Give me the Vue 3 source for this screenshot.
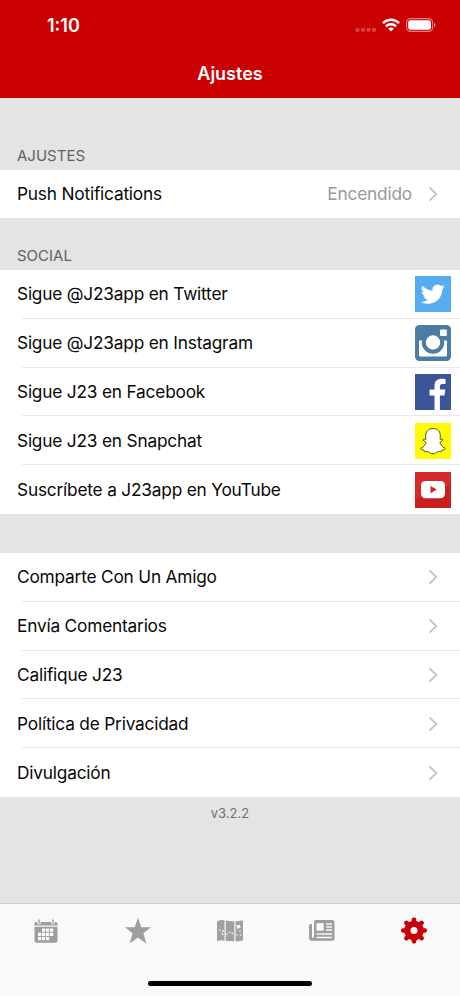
<script setup>
const social = [
  { label: 'Sigue @J23app en Twitter', icon: 'twitter' },
  { label: 'Sigue @J23app en Instagram', icon: 'instagram' },
  { label: 'Sigue J23 en Facebook', icon: 'facebook' },
  { label: 'Sigue J23 en Snapchat', icon: 'snapchat' },
  { label: 'Suscríbete a J23app en YouTube', icon: 'youtube' },
]
const links = ['Comparte Con Un Amigo', 'Envía Comentarios', 'Califique J23', 'Política de Privacidad', 'Divulgación']
const teeth = [0, 45, 90, 135, 180, 225, 270, 315]
const days = [[8, 9], [12, 9], [16, 9], [4, 13.2], [8, 13.2], [12, 13.2], [16, 13.2], [4, 17.4], [8, 17.4], [12, 17.4]]
</script>

<template>
  <div class="screen">
    <header class="top">
      <div class="status">
        <span class="time">1:10</span>
        <div class="indicators">
          <svg class="dots" width="22" height="14" viewBox="0 0 22 14" fill="#fff" fill-opacity=".25">
            <rect x="0.5" y="10" width="4" height="3.8" rx="1" /><rect x="6" y="10" width="4" height="3.8" rx="1" />
            <rect x="11.5" y="10" width="4" height="3.8" rx="1" /><rect x="17" y="10" width="4" height="3.8" rx="1" />
          </svg>
          <svg class="wifi" width="18" height="14" viewBox="0 0 18 14" fill="none" stroke="#fff" stroke-width="2.4">
            <path d="M.9 5.2C5.5.6 12.5.6 17.1 5.2M3.9 8.3c2.900-2.800 7.300-2.800 10.200 0" />
            <path d="M6.1 10.5c1.700-1.500 4.100-1.500 5.800 0L9 13.400z" fill="#fff" stroke="none" />
          </svg>
          <svg class="battery" width="30" height="14" viewBox="0 0 30 14">
            <rect x=".6" y=".6" width="26" height="12.8" rx="3.8" fill="none" stroke="#fff" stroke-opacity=".5" stroke-width="1.1" />
            <rect x="2.2" y="2.2" width="22.8" height="9.6" rx="2.2" fill="#fff" />
            <path d="M28 4.800c2 .8 2 3.600 0 4.400z" fill="#fff" fill-opacity=".55" />
          </svg>
        </div>
      </div>
      <h1>Ajustes</h1>
    </header>

    <main>
      <h2 class="first">AJUSTES</h2>
      <section class="group">
        <div class="row push">
          <span>Push Notifications</span>
          <span class="value">Encendido</span>
          <svg class="chevron" width="10" height="16" viewBox="0 0 10 16"><path d="M1.5 1.3 8.3 8l-6.800 6.700" /></svg>
        </div>
      </section>
      <h2>SOCIAL</h2>
      <section class="group">
        <div v-for="s in social" :key="s.icon" class="row">
          <span>{{ s.label }}</span>
          <svg class="brand" width="36" height="36" viewBox="0 0 36 36">
            <g v-if="s.icon === 'twitter'">
              <rect width="36" height="36" fill="#55acee" />
              <path transform="translate(6 5.7) scale(1.01)" fill="#fff" d="M23.600 5c-.9.400-1.800.7-2.800.8 1-.6 1.800-1.600 2.100-2.700-.9.600-2 1-3.100 1.200a4.900 4.900 0 0 0-8.300 4.500C7.400 8.600 3.800 6.600 1.400 3.700a4.900 4.900 0 0 0 1.500 6.500c-.8 0-1.500-.2-2.200-.6 0 2.400 1.700 4.300 3.900 4.800-.7.200-1.400.2-2.200.1.600 1.900 2.400 3.300 4.500 3.400A9.800 9.800 0 0 1-.3 19.900c9.800 5.700 21.700-1.400 21.400-12.400 1-.7 1.800-1.500 2.500-2.500z" />
            </g>
            <g v-else-if="s.icon === 'instagram'">
              <rect width="36" height="36" rx="4.5" fill="#4c7ba3" />
              <path d="M4 15.500h28V30q0 1.500-1.500 1.500h-25Q4 31.500 4 30z" fill="#fff" />
              <circle cx="18" cy="17.500" r="11.200" fill="#4c7ba3" />
              <circle cx="18" cy="17.500" r="7.200" fill="#fff" />
              <rect x="25" y="4.500" width="6.800" height="6.500" rx="1" fill="#fff" />
            </g>
            <g v-else-if="s.icon === 'facebook'">
              <rect width="36" height="36" fill="#3b5599" />
              <path d="M19.500 36V21.500h-5v-6h5v-3.800c0-5 3-7 7.300-7 1.700 0 3.100.1 3.700.2v5h-2.800c-2.300 0-2.800 1.100-2.800 2.800v2.800h5.400l-.8 6h-4.600V36z" fill="#fff" />
            </g>
            <g v-else-if="s.icon === 'snapchat'">
              <rect width="36" height="36" fill="#fffc00" />
              <path d="M18 5.500c5.200 0 7.500 3.600 7.300 7.500l-.2 3.300c1 .5 2.200-.6 2.800.3.600 1-1.700 1.600-2.700 2.500-.8 1 1.900 5.300 5 6 .9.500-.3 1.600-3.100 2-.4.500-.2 1.500-.8 1.600-1 .1-2.500-.4-4 .2-1.500.7-2.300 2-4.300 2s-2.800-1.300-4.300-2c-1.500-.6-3-.1-4-.2-.6-.1-.4-1.100-.8-1.600-2.800-.4-4-1.500-3.100-2 3.100-.7 5.800-5 5-6-1-.9-3.300-1.500-2.700-2.500.6-.9 1.800.2 2.800-.3l-.2-3.300C10.500 9.100 12.800 5.500 18 5.500z" fill="#fff" stroke="#55521b" stroke-width="1" stroke-linejoin="round" />
            </g>
            <g v-else>
              <rect width="36" height="36" fill="#c81f20" />
              <path d="M0 0h36v13L0 27z" fill="#d5292a" />
              <rect x="6" y="9" width="24" height="17.300" rx="4.500" fill="#fff" />
              <path d="m15.500 14 6.200 3.600-6.200 3.600z" fill="#c92324" />
            </g>
          </svg>
        </div>
      </section>
      <section class="group links">
        <div v-for="l in links" :key="l" class="row">
          <span>{{ l }}</span>
          <svg class="chevron" width="10" height="16" viewBox="0 0 10 16"><path d="M1.5 1.3 8.3 8l-6.800 6.700" /></svg>
        </div>
      </section>
      <p class="version">v3.2.2</p>
    </main>

    <nav>
      <div class="tabs">
        <svg width="28" height="28" viewBox="0 0 28 28">
          <g transform="translate(2 2)">
            <path d="M.5 4.500Q.5 3 2 3h20q1.500 0 1.500 1.500v2H.5zM.5 7.800h23v14q0 2-2 2H2.500q-2 0-2-2z" fill="#9e9e9e" />
            <circle cx="5" cy="3.500" r="1.900" fill="#f9f9f9" /><circle cx="19" cy="3.500" r="1.900" fill="#f9f9f9" />
            <path d="M5 1v3M19 1v3" stroke="#9e9e9e" stroke-width="1.400" stroke-linecap="round" />
            <rect v-for="d in days" :key="d.join()" :x="d[0]" :y="d[1] + .5" width="3.200" height="3.300" fill="#f9f9f9" />
          </g>
        </svg>
        <svg width="28" height="28" viewBox="0 0 28 28"><path d="m14 .8 3.300 9.400h9.700l-7.600 6.100 2.900 10.100-8.300-5.800-8.300 5.800 2.900-10.100L1 10.200h9.700z" fill="#9e9e9e" /></svg>
        <svg width="28" height="28" viewBox="0 0 28 28">
          <path d="M1 5.500q0-1.200 1.200-1.700Q5 2.800 8.500 3.200v20.500q-3.500-.8-6.300.3Q1 24.500 1 23.300zM9.700 3.400l8.600 1v19.800l-8.600-.4zM19.500 4.200q3.500.3 6-.7 1.500-.5 1.500 1v17.800q0 1.100-1.200 1.500-3 .8-6.300.3z" fill="#a0a0a0" />
          <g fill="#f9f9f9"><circle cx="4" cy="13" r=".8" /><circle cx="7" cy="14" r=".9" /><circle cx="6.500" cy="17" r=".9" /><circle cx="11" cy="17" r=".8" /><circle cx="16.500" cy="16.500" r=".8" /><circle cx="21" cy="18" r=".8" /><circle cx="24" cy="14" r=".8" /><circle cx="24.500" cy="18" r=".8" /><path d="M12 16l2-1.500 2 1.500-2-.5zM20 8l2 .5 2-1v2l1 1-2 .5-1.500 1.500-.5-2z" /></g>
        </svg>
        <svg width="28" height="28" viewBox="0 0 28 28">
          <path d="M1 8.500q0-1.600 2-1.600h1V20q0 1 1 1t1-1V5q0-2 2-2h16.500q2 0 2 2v16.500q0 2.300-2.300 2.300H4q-3 0-3-3z" fill="#9e9e9e" />
          <path d="M8.500 6.200h7.200v7.500H8.500z" fill="#f9f9f9" />
          <path d="M18 7h6M18 10h6M18 13h6M8.500 17h15.500M8.500 20.500h15.500" stroke="#f9f9f9" stroke-width="1.300" />
        </svg>
        <svg width="28" height="28" viewBox="0 0 28 28">
          <g fill="#c90007">
            <rect v-for="a in teeth" :key="a" :transform="`rotate(${a} 14 13.5)`" x="11.700" y=".5" width="4.600" height="8" rx="2" />
            <circle cx="14" cy="13.500" r="9.800" />
          </g>
          <circle cx="14" cy="13.500" r="3.500" fill="#f9f9f9" />
        </svg>
      </div>
      <div class="home"></div>
    </nav>
  </div>
</template>

<style>
body { margin: 0; }
</style>
<style scoped>
.screen { width: 460px; height: 996px; display: flex; flex-direction: column; overflow: hidden; background: #e4e4e4; color: #080808; font-family: Inter, "Liberation Sans", sans-serif; }
.top { height: 98px; background: #cb0000; color: #fff; }
.status { height: 50px; display: flex; justify-content: space-between; padding: 0 23px 0 47px; }
.time { padding-top: 15px; font-size: 18px; line-height: 22px; font-weight: 600; }
.indicators { display: flex; align-items: flex-start; padding-top: 18px; }
.wifi { margin-left: 5px; }
.battery { margin-left: 6px; margin-right: 1px; }
h1 { margin: 13px 0 0; text-align: center; font-size: 18px; line-height: 22px; font-weight: 600; }
main { flex: 1; min-height: 0; }
h2 { box-sizing: border-box; margin: 0; height: 52px; padding: 28px 17px 0; font-size: 15px; line-height: 20px; font-weight: 400; color: #626262; }
h2.first { height: 72px; padding-top: 48px; }
.group { background: #fff; }
.row { display: flex; align-items: center; height: 48.8px; padding: 0 9px 0 17px; font-size: 17.3px; letter-spacing: -.2px; line-height: 22px; white-space: nowrap; background: linear-gradient(#e8e8e8, #e8e8e8) 22px 100% / 100% 1px no-repeat; }
.row:last-child { background: none; }
.row.push { height: 48px; }
.row > svg { margin-left: auto; flex: none; }
.value { margin-left: auto; color: #999; }
.row .chevron { margin-right: 13px; fill: none; stroke: #c3c3c5; stroke-width: 1.8; }
.row.push .chevron { margin-left: 16px; }
.links { margin-top: 39px; }
.version { margin: 6px 0 0; text-align: center; font-size: 13px; line-height: 20px; color: #707070; }
nav { box-sizing: border-box; height: 93px; border-top: 1px solid #cfcfcf; background: #f9f9f9; }
.tabs { height: 79px; box-sizing: border-box; display: grid; grid-template-columns: repeat(5, 1fr); justify-items: center; padding-top: 13px; }
.home { width: 164px; height: 5px; margin: -2px auto 0; border-radius: 3px; background: #000; }
</style>
